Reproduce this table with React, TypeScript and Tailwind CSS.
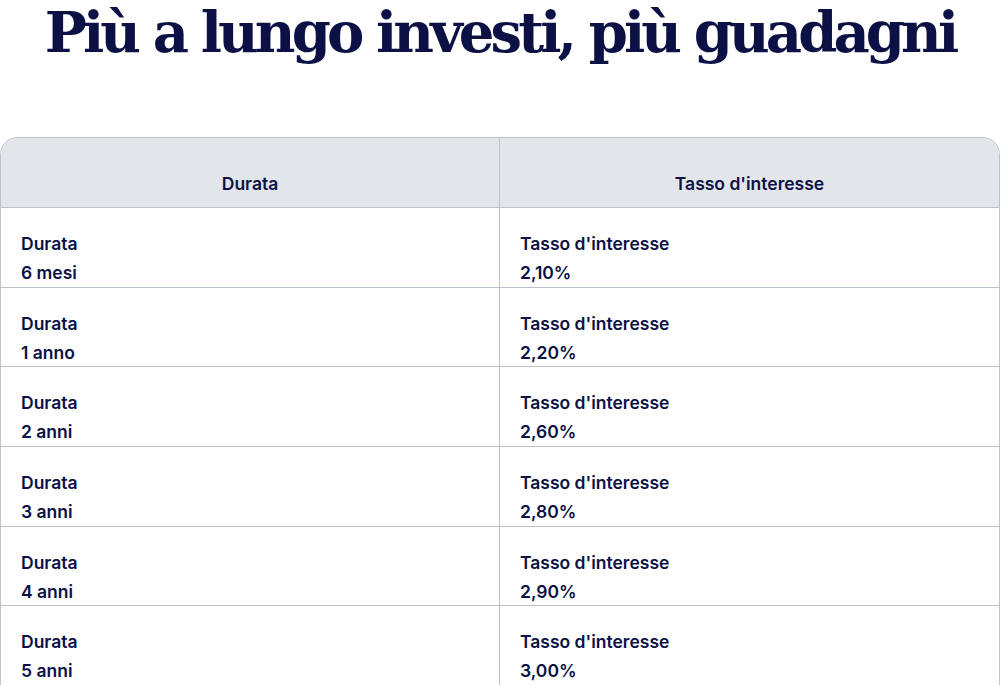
const rows = [
  { durata: "6 mesi", tasso: "2,10%" },
  { durata: "1 anno", tasso: "2,20%" },
  { durata: "2 anni", tasso: "2,60%" },
  { durata: "3 anni", tasso: "2,80%" },
  { durata: "4 anni", tasso: "2,90%" },
  { durata: "5 anni", tasso: "3,00%" },
];

export default function App() {
  return (
    <div className="min-h-screen bg-white text-[#0b1145]" style={{ fontFamily: "Inter, 'Noto Sans', sans-serif" }}>
      {/* Title */}
      <h1
        className="h-[68px] pb-[4px] text-center text-[56px] leading-[64px] font-bold tracking-[-3.9px]"
        style={{ fontFamily: "'DejaVu Serif', 'Liberation Serif', serif" }}
      >
        Più a lungo investi, più guadagni
      </h1>

      {/* Table */}
      <div className="mt-[69px] overflow-hidden rounded-t-[18px] border border-b-0 border-[#bcc2cc]">
        <div className="grid grid-cols-[498px_1fr] bg-[#e2e5ea] text-[17.5px] leading-[29px] font-semibold">
          <div className="pt-[31px] pb-[9px] text-center">Durata</div>
          <div className="border-l border-[#bcc2cc] pt-[31px] pb-[9px] text-center">Tasso d'interesse</div>
        </div>
        {rows.map((r) => (
          <div key={r.durata} className="grid grid-cols-[498px_1fr] border-t border-[#bcc2cc] text-[17.5px] leading-[29px] font-semibold">
            <div className="h-[78.67px] px-[20px] pt-[21px]">
              <div>Durata</div>
              <div>{r.durata}</div>
            </div>
            <div className="h-[78.67px] border-l border-[#bcc2cc] px-[20px] pt-[21px]">
              <div>Tasso d'interesse</div>
              <div>{r.tasso}</div>
            </div>
          </div>
        ))}
      </div>
    </div>
  );
}
